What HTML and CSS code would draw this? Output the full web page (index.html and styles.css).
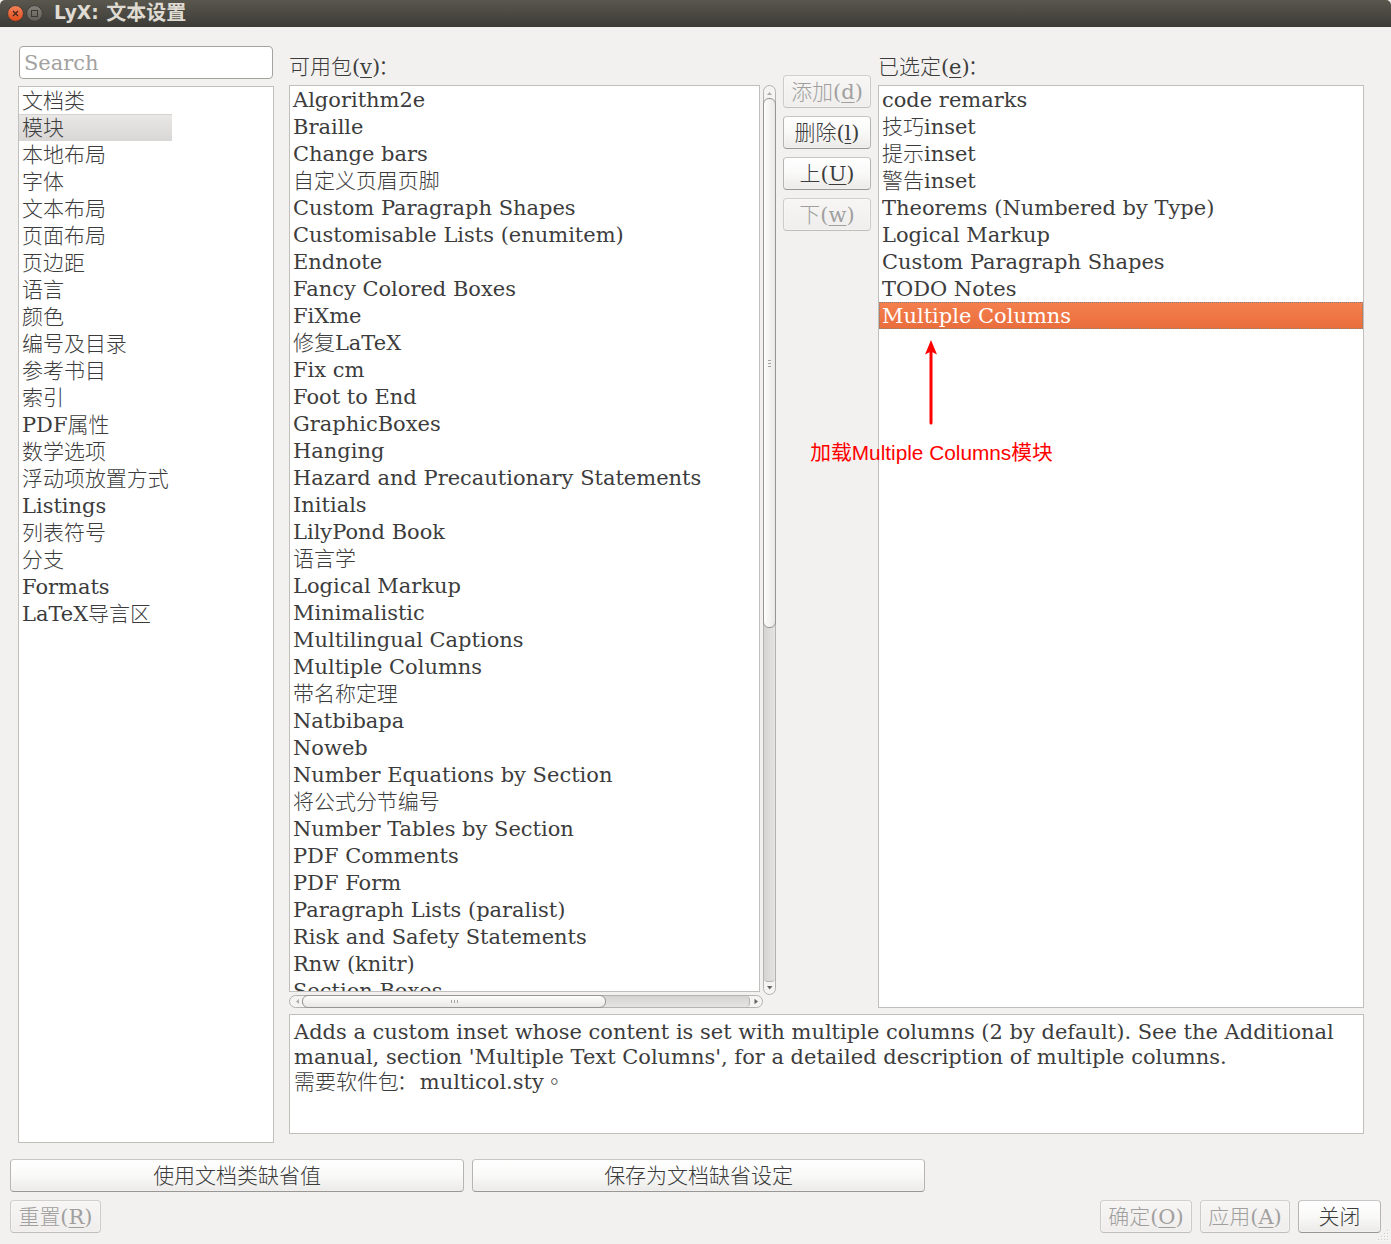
FILE: index.html
```
<!DOCTYPE html>
<html lang="zh-CN">
<head>
<meta charset="utf-8">
<title>LyX: 文本设置</title>
<link rel="stylesheet" href="styles.css">
</head>
<body>
<header class="titlebar">
  <svg class="window-buttons" width="44" height="27" viewBox="0 0 44 27">
    <defs>
      <linearGradient id="close" x1="0" y1="0" x2="0" y2="1"><stop offset="0" stop-color="#f4845c"/><stop offset="1" stop-color="#dd4b1a"/></linearGradient>
      <linearGradient id="max" x1="0" y1="0" x2="0" y2="1"><stop offset="0" stop-color="#85837b"/><stop offset="1" stop-color="#5d5b54"/></linearGradient>
    </defs>
    <circle cx="15.5" cy="13.5" r="7.9" fill="url(#close)" stroke="#35332e" stroke-width=".8"/>
    <path d="M13 11l5 5M18 11l-5 5" stroke="#45261a" stroke-width="1.3"/>
    <circle cx="34.5" cy="13.5" r="7.9" fill="url(#max)" stroke="#35332e" stroke-width=".8"/>
    <rect x="31.5" y="10.5" width="6" height="6" fill="none" stroke="#3a3935"/>
  </svg>
  <h1 class="title">LyX: <span class="title-name">文本设置</span></h1>
</header>
<main class="content">
  <aside class="sidebar">
    <input class="search" type="text" placeholder="Search">
    <ul class="list sections">
      <li>文档类</li><li class="current">模块</li><li>本地布局</li><li>字体</li><li>文本布局</li><li>页面布局</li><li>页边距</li><li>语言</li><li>颜色</li><li>编号及目录</li><li>参考书目</li><li>索引</li><li>PDF属性</li><li>数学选项</li><li>浮动项放置方式</li><li>Listings</li><li>列表符号</li><li>分支</li><li>Formats</li><li>LaTeX导言区</li>
    </ul>
  </aside>
  <section class="modules">
    <div class="pickers">
      <div class="available">
        <div class="label">可用包(<u>v</u>)<span class="colon">：</span></div>
        <div class="scroll-area">
          <ul class="list">
            <li>Algorithm2e</li><li>Braille</li><li>Change bars</li><li>自定义页眉页脚</li><li>Custom Paragraph Shapes</li><li>Customisable Lists (enumitem)</li><li>Endnote</li><li>Fancy Colored Boxes</li><li>FiXme</li><li>修复LaTeX</li><li>Fix cm</li><li>Foot to End</li><li>GraphicBoxes</li><li>Hanging</li><li>Hazard and Precautionary Statements</li><li>Initials</li><li>LilyPond Book</li><li>语言学</li><li>Logical Markup</li><li>Minimalistic</li><li>Multilingual Captions</li><li>Multiple Columns</li><li>带名称定理</li><li>Natbibapa</li><li>Noweb</li><li>Number Equations by Section</li><li>将公式分节编号</li><li>Number Tables by Section</li><li>PDF Comments</li><li>PDF Form</li><li>Paragraph Lists (paralist)</li><li>Risk and Safety Statements</li><li>Rnw (knitr)</li><li>Section Boxes</li>
          </ul>
          <div class="bar vertical">
            <svg class="step" width="11" height="12"><path d="M3 9h5l-2.500-3z" fill="#b0aeaa"/></svg>
            <div class="groove"><div class="thumb"><svg width="3" height="7"><path d="M0 .5h3M0 3.500h3M0 6.500h3" stroke="#a5a3a0"/></svg></div></div>
            <svg class="step" width="11" height="12"><path d="M3 4h5.500l-2.750 3.500z" fill="#66645f"/></svg>
          </div>
          <div class="bar horizontal">
            <svg class="step" width="12" height="11"><path d="M9 3v5L6 5.500z" fill="#b0aeaa"/></svg>
            <div class="groove"><div class="thumb"><svg width="7" height="3"><path d="M.5 0v3M3.500 0v3M6.500 0v3" stroke="#a5a3a0"/></svg></div></div>
            <svg class="step" width="12" height="11"><path d="M4.500 2.750v5.500l3.500-2.750z" fill="#66645f"/></svg>
          </div>
        </div>
      </div>
      <div class="transfer">
        <button class="button" disabled>添加(<u>d</u>)</button>
        <button class="button">删除(<u>l</u>)</button>
        <button class="button">上(<u>U</u>)</button>
        <button class="button" disabled>下(<u>w</u>)</button>
      </div>
      <div class="selected">
        <div class="label">已选定(<u>e</u>)<span class="colon">：</span></div>
        <ul class="list">
          <li>code remarks</li><li>技巧inset</li><li>提示inset</li><li>警告inset</li><li>Theorems (Numbered by Type)</li><li>Logical Markup</li><li>Custom Paragraph Shapes</li><li>TODO Notes</li><li class="active">Multiple Columns</li>
        </ul>
        <div class="annotation">
          <svg width="14" height="86" viewBox="0 0 14 86"><path d="M7 12v71" stroke="#f00" stroke-width="3" stroke-linecap="round"/><path d="M7 0l6 14.500-6-3-6 3z" fill="#f00"/></svg>
          <span class="note">加载Multiple Columns模块</span>
        </div>
      </div>
    </div>
    <div class="description">Adds a custom inset whose content is set with multiple columns (2 by default). See the Additional<br>manual, section 'Multiple Text Columns', for a detailed description of multiple columns.<br>需要软件包<span class="colon">：</span>multicol.sty<span class="stop">。</span></div>
  </section>
</main>
<footer class="footer">
  <div class="defaults">
    <button class="button">使用文档类缺省值</button>
    <button class="button">保存为文档缺省设定</button>
  </div>
  <div class="actions">
    <button class="button reset" disabled>重置(<u>R</u>)</button>
    <button class="button ok" disabled>确定(<u>O</u>)</button>
    <button class="button apply" disabled>应用(<u>A</u>)</button>
    <button class="button close">关闭</button>
  </div>
  <svg class="grip" width="12" height="12">
    <path d="M10 1.500h1M7 4.500h1M10 4.500h1M4 7.500h1M7 7.500h1M10 7.500h1M1 10.500h1M4 10.500h1M7 10.500h1M10 10.500h1" stroke="#cfcdca"/>
    <path d="M11 2.500h1M8 5.500h1M11 5.500h1M5 8.500h1M8 8.500h1M11 8.500h1M2 11.500h1M5 11.500h1M8 11.500h1M11 11.500h1" stroke="#fff"/>
  </svg>
</footer>
</body>
</html>
```
FILE: styles.css
```
* { box-sizing: border-box; }

body {
  margin: 0;
  width: 1391px;
  height: 1244px;
  overflow: hidden;
  position: relative;
  display: flex;
  flex-direction: column;
  background: #f2f1ef;
  color: #3c3c3c;
  font: 300 20.97px/27px "DejaVu Serif", "Noto Sans CJK SC", serif;
}

u { text-decoration-thickness: 1px; text-underline-offset: 3px; text-decoration-skip-ink: none; }

.titlebar {
  display: flex;
  height: 27px;
  background: linear-gradient(#59574d, #3d3c38);
  border-bottom: 1px solid #3a3935;
  border-radius: 5px 5px 0 0;
}
.title {
  margin: 0 0 0 10px;
  color: #dfdbd2;
  font: bold 18.7px/25px "DejaVu Sans", "Noto Sans CJK SC", sans-serif;
}
.title-name { margin-left: 1px; font-size: 20px; line-height: 20px; vertical-align: -1px; }

.content { display: flex; gap: 15px; height: 1116px; padding: 18px 27px 0 18px; }

.sidebar { display: flex; flex-direction: column; width: 256px; gap: 7px; }
.search {
  height: 33px;
  margin: 1px 1px 0;
  padding: 0 4px;
  border: 1px solid #a5a3a0;
  border-radius: 4px;
  background: #fff;
  font: inherit;
}
.search::placeholder { color: #a3a2a1; opacity: 1; }

.list {
  margin: 0;
  padding: 0;
  list-style: none;
  overflow: hidden;
  background: #fff;
  border: 1px solid #c0bfbb;
  white-space: nowrap;
}
.list li { height: 27px; padding: 1px 0 0 3px; }
.sections { flex: 1; }
.sections li { width: 153px; }
.current { background: linear-gradient(#d5d3d1, #d5d3d1) top / 100% 1px no-repeat, linear-gradient(#e9e8e6, #d9d7d5); }
.active {
  color: #fff;
  background: linear-gradient(#f5804f, #ea6d3c);
  outline: 1px dotted #83817c;
  outline-offset: -1px;
}

.modules { display: flex; flex-direction: column; width: 1075px; }
.pickers { display: flex; height: 963px; }
.label { height: 40px; padding-top: 9px; white-space: nowrap; }
.colon { margin: 0 2px 0 -2px; }
.available { width: 487px; }
.scroll-area {
  display: grid;
  grid-template: 907px 16px / 471px 16px;
}
.available .list { height: 907px; }

.bar {
  display: flex;
  border: 1px solid #b5b3b0;
  background: #f5f4f3;
  border-radius: 7px;
}
.vertical {
  grid-area: 1 / 2;
  flex-direction: column;
  width: 13px;
  height: 910px;
  margin-left: 3px;
}
.horizontal {
  grid-area: 2 / 1 / 3 / 3;
  width: 474px;
  height: 13px;
  margin-top: 3px;
}
.step { flex: none; }
.groove { display: flex; flex: 1; min-width: 0; min-height: 0; }
.vertical .groove {
  flex-direction: column;
  background: linear-gradient(90deg, #d5d4d1, #e5e4e2);
  border-bottom: 1px solid #b5b3b0;
  border-radius: 7px 7px 5px 5px;
}
.horizontal .groove {
  background: linear-gradient(#d5d4d1, #e5e4e2);
  border-right: 1px solid #b5b3b0;
  border-radius: 7px 5px 5px 7px;
}
.thumb {
  display: flex;
  flex: none;
  align-items: center;
  justify-content: center;
  border: 1px solid #979592;
  border-radius: 6px;
}
.vertical .thumb { height: 530px; margin: 0 -1px; background: linear-gradient(90deg, #fdfdfd, #e9e8e6); }
.horizontal .thumb { width: 304px; margin: -1px 0; background: linear-gradient(#fdfdfd, #e9e8e6); }

.transfer { display: flex; flex-direction: column; gap: 8px; width: 88px; margin: 30px 7px 0; }
.button {
  height: 33px;
  padding: 1px 0 0;
  border: 1px solid #b6b4b1;
  border-top-color: #c8c6c3;
  border-bottom-color: #999794;
  border-radius: 4px;
  background: linear-gradient(#fff, #f9f9f8 50%, #ebeae8);
  box-shadow: inset 0 0 2px #fff;
  color: #3c3c3c;
  font: inherit;
  white-space: nowrap;
}
.button:disabled {
  color: #a09f9e;
  border-color: #d2d0cd #cdcbc8 #c0beba;
  background: linear-gradient(#f7f6f5, #efeeec);
}

.selected { position: relative; width: 486px; }
.selected .list { height: 923px; }
.annotation {
  position: absolute;
  left: -69px;
  top: 295px;
  width: 243px;
  display: flex;
  flex-direction: column;
  align-items: center;
  gap: 13px;
  color: #f00;
  font: 400 20.8px/27px "Liberation Sans", "Noto Sans CJK SC", sans-serif;
  white-space: nowrap;
}
.note { margin-left: 2px; }

.description {
  height: 120px;
  margin-top: 6px;
  padding: 5px 4px;
  border: 1px solid #c0bfbb;
  background: #fff;
  line-height: 25px;
  white-space: nowrap;
}
.stop { font-family: "Noto Sans CJK TC", sans-serif; line-height: 1px; }

.footer { padding: 16px 10px 0; }
.defaults { display: grid; grid-template-columns: 454px 453px; gap: 8px; }
.actions { display: flex; gap: 8px; margin-top: 8px; }
.reset { width: 91px; margin-right: auto; }
.ok { width: 92px; }
.apply { width: 90px; }
.close { width: 83px; }
.grip { position: absolute; right: 2px; bottom: 3px; }
```
